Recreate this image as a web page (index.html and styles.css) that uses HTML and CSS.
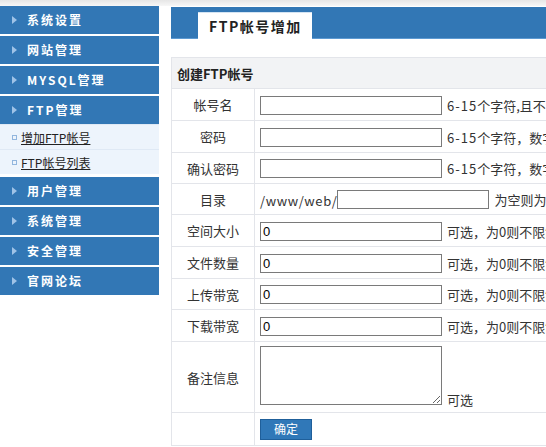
FILE: index.html
```html
<!DOCTYPE html>
<html lang="zh-CN">
<head>
<meta charset="utf-8">
<title>FTP帐号增加</title>
<link rel="stylesheet" href="styles.css">
</head>
<body>
<div class="topstrip"></div>
<div class="layout">
  <nav class="sidebar">
    <div class="menu-item"><span class="arrow"></span>系统设置</div>
    <div class="menu-item"><span class="arrow"></span>网站管理</div>
    <div class="menu-item"><span class="arrow"></span>MYSQL管理</div>
    <div class="menu-item open"><span class="arrow"></span>FTP管理</div>
    <ul class="submenu">
      <li><span class="sq"></span><a href="#">增加FTP帐号</a></li>
      <li><span class="sq"></span><a href="#">FTP帐号列表</a></li>
    </ul>
    <div class="menu-item"><span class="arrow"></span>用户管理</div>
    <div class="menu-item"><span class="arrow"></span>系统管理</div>
    <div class="menu-item"><span class="arrow"></span>安全管理</div>
    <div class="menu-item"><span class="arrow"></span>官网论坛</div>
  </nav>
  <main class="main">
    <div class="tabbar"><div class="tab">FTP帐号增加</div></div>
    <table class="form">
      <colgroup><col class="c1"><col class="c2"></colgroup>
      <tr class="head short"><td colspan="2">创建FTP帐号</td></tr>
      <tr><td class="lbl">帐号名</td><td><input class="txt" type="text"><span class="hint"><span class="num">6-15</span>个字符,且不能包含中文和特殊字符</span></td></tr>
      <tr><td class="lbl">密码</td><td><input class="txt" type="password"><span class="hint"><span class="num">6-15</span>个字符，数字、字母或下划线组合</span></td></tr>
      <tr class="short"><td class="lbl">确认密码</td><td><input class="txt" type="password"><span class="hint"><span class="num">6-15</span>个字符，数字、字母或下划线组合</span></td></tr>
      <tr class="short"><td class="lbl">目录</td><td><span class="path">/www/web/</span><input class="txt dir" type="text"><span class="hint">为空则为帐号名同名目录</span></td></tr>
      <tr><td class="lbl">空间大小</td><td><input class="txt" type="text" value="0"><span class="hint">可选，为0则不限制，单位MB</span></td></tr>
      <tr><td class="lbl">文件数量</td><td><input class="txt" type="text" value="0"><span class="hint">可选，为0则不限制，单位个</span></td></tr>
      <tr class="short"><td class="lbl">上传带宽</td><td><input class="txt" type="text" value="0"><span class="hint">可选，为0则不限制，单位KB/s</span></td></tr>
      <tr><td class="lbl">下载带宽</td><td><input class="txt" type="text" value="0"><span class="hint">可选，为0则不限制，单位KB/s</span></td></tr>
      <tr class="memo"><td class="lbl">备注信息</td><td><textarea class="area"></textarea><span class="hint">可选</span></td></tr>
      <tr class="btnrow"><td class="lbl"></td><td><button class="btn" type="button">确定</button></td></tr>
    </table>
  </main>
</div>
</body>
</html>
```

FILE: styles.css
```css
html, body {
  margin: 0;
  padding: 0;
  overflow: hidden;
  background: #fff;
}
body {
  font-family: "Noto Sans CJK SC", "Noto Sans", sans-serif;
  font-size: 13px;
  color: #333;
}
.topstrip {
  height: 6px;
  background: linear-gradient(#e6e6e6, #f7f7f7);
}
.layout {
  display: flex;
  align-items: flex-start;
}
.sidebar {
  flex: 0 0 159px;
  width: 159px;
}
.menu-item {
  height: 28px;
  line-height: 28px;
  margin-bottom: 2px;
  background: #3277b5;
  color: #fff;
  font-weight: bold;
  font-size: 12px;
  letter-spacing: 2px;
  display: flex;
  align-items: center;
  padding-left: 12px;
}
.menu-item.open { margin-bottom: 0; }
.arrow {
  width: 0;
  height: 0;
  border-left: 5px solid #9fc3e7;
  border-top: 4px solid transparent;
  border-bottom: 4px solid transparent;
  margin-right: 10px;
}
.submenu {
  list-style: none;
  margin: 0 0 2px 0;
  padding: 0;
  background: #fff;
}
.submenu li {
  height: 24px;
  background: #edf4fc;
  border-top: 1px solid #dfe9f5;
  display: flex;
  align-items: center;
  padding-left: 12px;
  font-size: 12px;
}
.submenu li:last-child { border-bottom: 1px solid #fff; }
.sq {
  width: 3px;
  height: 3px;
  border: 1px solid #92b6de;
  margin-right: 4px;
}
.submenu a {
  color: #222;
  text-decoration: underline;
}
.main {
  flex: 0 0 auto;
  width: 820px;
  margin-left: 12px;
  padding-top: 1px;
}
.tabbar {
  height: 32px;
  background: #3277b5;
  border-bottom: 1px solid #5d9ad2;
  box-sizing: border-box;
  display: flex;
  align-items: flex-end;
  padding-left: 27px;
}
.tab {
  height: 27px;
  line-height: 27px;
  background: #fff;
  border-top: 1px solid #d4e4f3;
  box-sizing: border-box;
  padding: 0 10px 0 11px;
  font-weight: bold;
  font-size: 14px;
  letter-spacing: 1.5px;
  color: #222;
  margin-bottom: -1px;
}
.form {
  margin-top: 18px;
  border-collapse: collapse;
  table-layout: fixed;
  width: 780px;
}
.form col.c1 { width: 83px; }
.form td {
  border: 1px solid #e3e5ea;
  height: 31px;
  padding: 0 5px;
  white-space: nowrap;
  overflow: hidden;
}
.form tr.short td { height: 30px; }
.form tr.head td {
  background: #f2f3f5;
  font-weight: bold;
  padding-left: 5px;
  color: #222;
}
.form td.lbl {
  text-align: center;
  padding: 0;
}
.txt {
  width: 182px;
  height: 19px;
  box-sizing: border-box;
  border: 1px solid #7a7a7a;
  padding: 1px 2px;
  font-family: "Liberation Sans", Arial, sans-serif;
  font-size: 13px;
  color: #000;
  vertical-align: middle;
  margin: 0;
}
.txt.dir { width: 152px; }
.path {
  letter-spacing: 0.6px;
  vertical-align: middle;
}
.hint {
  margin-left: 5px;
  vertical-align: middle;
}
.num { letter-spacing: 1px; }
.form tr.memo td { height: 70px; }
.area {
  width: 182px;
  height: 59px;
  box-sizing: border-box;
  border: 1px solid #7a7a7a;
  margin: 0;
  padding: 2px;
  vertical-align: baseline;
  resize: both;
}
.memo .hint { vertical-align: baseline; }
.form tr.btnrow td { height: 32px; }
.btn {
  width: 52px;
  height: 21px;
  background: #3078b8;
  border: 1px solid #1f5f9a;
  color: #fff;
  font-family: "Noto Sans CJK SC", sans-serif;
  font-size: 12px;
  padding: 0;
  line-height: 18px;
  vertical-align: middle;
}
```
